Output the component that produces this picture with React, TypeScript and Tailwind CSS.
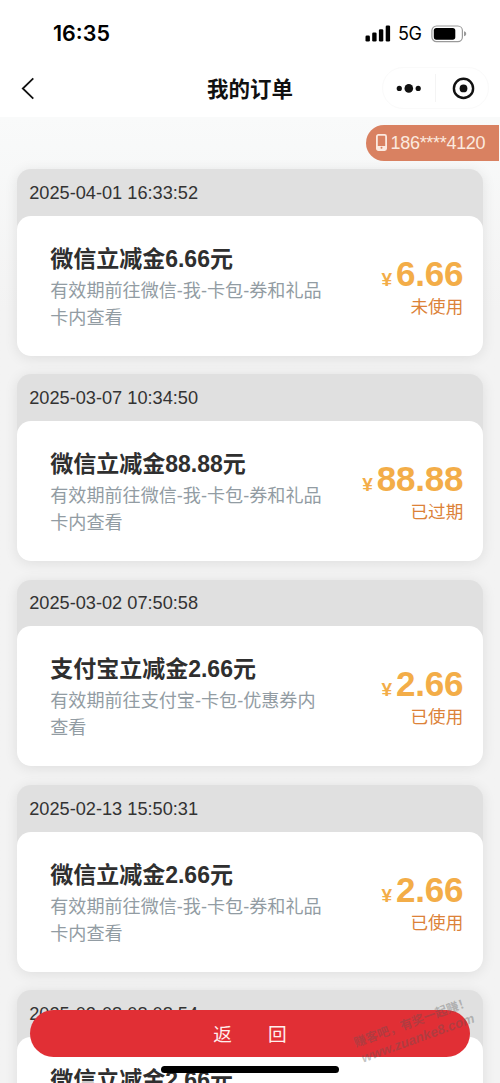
import type { ReactNode } from "react";

type Order = {
  time: string;
  title: string;
  desc: string;
  amount: string;
  status: string;
};

const WECHAT_DESC = "有效期前往微信-我-卡包-券和礼品卡内查看";

const orders: Order[] = [
  { time: "2025-04-01 16:33:52", title: "微信立减金6.66元", desc: WECHAT_DESC, amount: "6.66", status: "未使用" },
  { time: "2025-03-07 10:34:50", title: "微信立减金88.88元", desc: WECHAT_DESC, amount: "88.88", status: "已过期" },
  {
    time: "2025-03-02 07:50:58",
    title: "支付宝立减金2.66元",
    desc: "有效期前往支付宝-卡包-优惠券内查看",
    amount: "2.66",
    status: "已使用",
  },
  { time: "2025-02-13 15:50:31", title: "微信立减金2.66元", desc: WECHAT_DESC, amount: "2.66", status: "已使用" },
  { time: "2025-02-08 08:08:54", title: "微信立减金2.66元", desc: WECHAT_DESC, amount: "2.66", status: "已使用" },
];

function StatusBar() {
  return (
    <div className="flex h-[67px] items-center justify-between pl-[53px] pr-[33px] text-black">
      <span className="font-['Inter','Liberation_Sans',sans-serif] text-[21.5px] font-semibold leading-none">16:35</span>
      <div className="flex items-center">
        <svg width="26" height="17" viewBox="0 0 26 17" aria-hidden>
          <rect x="0.5" y="10.5" width="4.4" height="6" rx="1.3" />
          <rect x="7.2" y="7.5" width="4.4" height="9" rx="1.3" />
          <rect x="13.9" y="4.2" width="4.4" height="12.3" rx="1.3" />
          <rect x="20.7" y="0.5" width="4.4" height="16" rx="1.3" />
        </svg>
        <span className="ml-[7px] w-[25px] whitespace-nowrap pt-px font-['Inter','Liberation_Sans',sans-serif] text-[18px] leading-none tracking-tight">
          5G
        </span>
        <svg className="ml-2" width="36" height="18" viewBox="0 0 36 18" aria-hidden>
          <rect x="0.9" y="1" width="30.5" height="15.6" rx="4.6" fill="none" stroke="#9a9a9a" strokeWidth="1.2" />
          <rect x="2.8" y="2.9" width="21.5" height="11.8" rx="2.6" />
          <path d="M33 6.3c1.8.6 2.2 1.5 2.2 2.5s-.4 1.9-2.2 2.5z" fill="#9a9a9a" />
        </svg>
      </div>
    </div>
  );
}

function NavBar() {
  return (
    <div className="grid h-[50px] grid-cols-3 items-start">
      <svg className="ml-[21px] mt-[10px]" width="14" height="23" viewBox="0 0 14 23" fill="none" stroke="#111" aria-hidden>
        <path d="M12.3 1.4 1.8 11.5l10.5 10.1" strokeWidth="1.8" />
      </svg>
      <h1 className="mt-[7px] text-center text-[21.5px] font-bold leading-[32px] text-[#111]">我的订单</h1>
      <div className="mr-[11px] flex h-[42px] w-[107px] items-center justify-self-end rounded-full border border-[#fafafa]">
        <svg className="ml-[13px]" width="26" height="12" viewBox="0 0 26 12" fill="#111" aria-hidden>
          <circle cx="3.3" cy="6.4" r="2.6" />
          <circle cx="12.8" cy="6.4" r="4.3" />
          <circle cx="22.2" cy="6.4" r="2.6" />
        </svg>
        <span className="ml-[13px] h-7 w-px bg-[#f4f4f4]" />
        <svg className="ml-[15px]" width="24" height="24" viewBox="0 0 24 24" aria-hidden>
          <circle cx="12.5" cy="12.4" r="9.6" fill="none" stroke="#111" strokeWidth="2.4" />
          <circle cx="12.5" cy="12.4" r="3.9" fill="#111" />
        </svg>
      </div>
    </div>
  );
}

function PhoneTag({ children }: { children: ReactNode }) {
  return (
    <div className="ml-auto mr-px flex h-9 w-[133px] items-center rounded-l-full bg-[#d98161] pl-2.5 text-[#fbe9df]">
      <svg width="11" height="17" viewBox="0 0 11 17" fill="none" stroke="currentColor" aria-hidden>
        <rect x="0.9" y="0.9" width="9.2" height="15.2" rx="1.5" strokeWidth="1.8" />
        <path d="M1 12h9v4H1z" fill="currentColor" stroke="none" />
        <circle cx="5.5" cy="13.8" r="1" fill="#d98161" stroke="none" />
      </svg>
      <span className="ml-[3.5px] whitespace-nowrap pt-px text-[18px] leading-none tracking-[-0.3px]">{children}</span>
    </div>
  );
}

function OrderCard({ order }: { order: Order }) {
  return (
    <article className="h-[186.7px] shrink-0 rounded-[14px] bg-[#e0e0e0] shadow-[0_2px_14px_rgba(0,0,0,0.09)]">
      <div className="flex h-[46.7px] items-center pl-[12.5px] pt-px text-[18.2px] leading-none text-[#333]">{order.time}</div>
      <div className="flex h-[140px] justify-between rounded-[14px] bg-white pl-[33.5px] pr-5">
        <div className="w-[280px] pt-[27px]">
          <h2 className="text-[23px] font-bold leading-[33px] text-[#2f2f2f]">{order.title}</h2>
          <p className="pt-0.5 text-[18.1px] leading-[27px] text-[#929ca3]">{order.desc}</p>
        </div>
        <div className="flex flex-col items-end pt-[38px]">
          <div className="flex items-baseline whitespace-nowrap font-bold leading-[40px] text-[#f3ad48]">
            <span className="mr-1 text-[19px]">¥</span>
            <span className="text-[35px] tracking-[-0.2px]">{order.amount}</span>
          </div>
          <span className="-mt-[6px] text-[17.6px] leading-[27px] text-[#dc8238]">{order.status}</span>
        </div>
      </div>
    </article>
  );
}

function Watermark() {
  return (
    <div
      className="pointer-events-none absolute bottom-[37px] left-[347px] w-[136px] -rotate-[20deg] whitespace-nowrap text-center font-bold text-[#555]/35"
      aria-hidden
    >
      <div className="text-[12.3px] leading-[17px]">赚客吧，有奖一起赚！</div>
      <div className="text-[13.5px] italic leading-[15px]">www.zuanke8.com</div>
    </div>
  );
}

export default function App() {
  return (
    <div className="relative flex h-[1083px] w-[500px] flex-col overflow-hidden bg-[#f5f5f5] font-['Liberation_Sans','Noto_Sans_CJK_SC',sans-serif]">
      <header className="shrink-0 bg-white">
        <StatusBar />
        <NavBar />
      </header>

      <main className="min-h-0 flex-1 overflow-hidden bg-linear-to-b from-[#f9fafa] to-[#f3f3f3] to-20%">
        <div className="pt-[7.5px]">
          <PhoneTag>186****4120</PhoneTag>
        </div>
        <div className="mt-[8.5px] flex flex-col gap-[18.6px] px-[16.7px]">
          {orders.map((order) => (
            <OrderCard key={order.time} order={order} />
          ))}
        </div>
      </main>

      <button
        type="button"
        className="absolute bottom-[26px] left-[30px] flex h-[47px] w-[440px] items-center justify-center gap-9 rounded-full bg-[#e12f35] pt-1 text-[18.7px] text-[#fff0ee]"
      >
        <span>返</span>
        <span>回</span>
      </button>
      <Watermark />
      <div className="absolute bottom-[10.5px] left-[161px] h-[6.5px] w-[178px] rounded-full bg-black" />
    </div>
  );
}
